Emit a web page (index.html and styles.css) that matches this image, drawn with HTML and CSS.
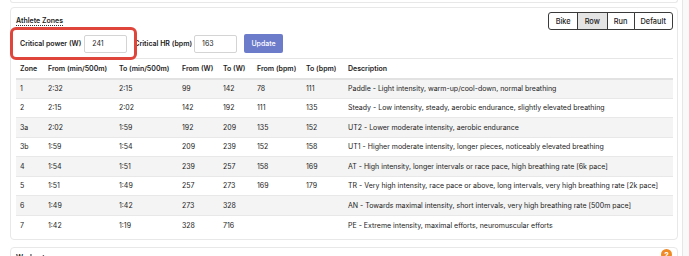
FILE: index.html
```html
<!DOCTYPE html>
<html>
<head>
<meta charset="utf-8">
<link rel="stylesheet" href="styles.css">
</head>
<body>
<div class="page">
  <main class="main">
    <div class="card prev"></div>
    <section class="card zones">
      <div class="highlight"></div>
      <div class="head">
        <h2 class="title">Athlete Zones</h2>
        <div class="btn-group">
          <button class="seg">Bike</button>
          <button class="seg active">Row</button>
          <button class="seg">Run</button>
          <button class="seg">Default</button>
        </div>
      </div>
      <form class="form">
        <label class="lbl">Critical power (W)</label>
        <input class="inp" value="241">
        <label class="lbl lbl2">Critical HR (bpm)</label>
        <input class="inp" value="163">
        <button type="button" class="update">Update</button>
      </form>
      <table class="tbl">
        <colgroup>
          <col class="c1"><col class="c2"><col class="c3"><col class="c4"><col class="c5"><col class="c6"><col class="c7"><col>
        </colgroup>
        <thead>
          <tr><th>Zone</th><th>From (min/500m)</th><th>To (min/500m)</th><th>From (W)</th><th>To (W)</th><th>From (bpm)</th><th>To (bpm)</th><th>Description</th></tr>
        </thead>
        <tbody>
          <tr><td>1</td><td>2:32</td><td>2:15</td><td>99</td><td>142</td><td>78</td><td>111</td><td>Paddle - Light intensity, warm-up/cool-down, normal breathing</td></tr>
          <tr><td>2</td><td>2:15</td><td>2:02</td><td>142</td><td>192</td><td>111</td><td>135</td><td>Steady - Low intensity, steady, aerobic endurance, slightly elevated breathing</td></tr>
          <tr><td>3a</td><td>2:02</td><td>1:59</td><td>192</td><td>209</td><td>135</td><td>152</td><td>UT2 - Lower moderate intensity, aerobic endurance</td></tr>
          <tr><td>3b</td><td>1:59</td><td>1:54</td><td>209</td><td>239</td><td>152</td><td>158</td><td>UT1 - Higher moderate intensity, longer pieces, noticeably elevated breathing</td></tr>
          <tr><td>4</td><td>1:54</td><td>1:51</td><td>239</td><td>257</td><td>158</td><td>169</td><td>AT - High intensity, longer intervals or race pace, high breathing rate [6k pace]</td></tr>
          <tr><td>5</td><td>1:51</td><td>1:49</td><td>257</td><td>273</td><td>169</td><td>179</td><td>TR - Very high intensity, race pace or above, long intervals, very high breathing rate [2k pace]</td></tr>
          <tr><td>6</td><td>1:49</td><td>1:42</td><td>273</td><td>328</td><td></td><td></td><td>AN - Towards maximal intensity, short intervals, very high breathing rate [500m pace]</td></tr>
          <tr><td>7</td><td>1:42</td><td>1:19</td><td>328</td><td>716</td><td></td><td></td><td>PE - Extreme intensity, maximal efforts, neuromuscular efforts</td></tr>
        </tbody>
      </table>
    </section>
    <section class="card next">
      <h2 class="title2">Workouts</h2>
      <span class="help">?</span>
    </section>
  </main>
  <div class="scrollbar"></div>
</div>
</body>
</html>
```
FILE: styles.css
```css
* { box-sizing: border-box; }
html, body { margin: 0; padding: 0; }
body {
  background: #fff;
  font-family: Inter, "Liberation Sans", sans-serif;
  color: #222;
  font-size: 7px;
  overflow: hidden;
  height: 256px;
}
.page { display: flex; height: 256px; }
.main { width: 682px; padding-left: 10px; padding-right: 4px; }
.scrollbar { flex: 1; border-left: 1px solid #e6e6e6; background: #f9f9f9; }
.card {
  background: #fff;
  border: 1px solid #e8e8e8;
  border-radius: 4px;
}
.prev { height: 3px; border-top: none; border-radius: 0 0 4px 4px; }
.zones {
  position: relative;
  margin-top: 4px;
  padding: 4px 4px 4px 5px;
  height: 233px;
}
.highlight {
  position: absolute;
  left: -1px; top: 19px;
  width: 127px; height: 33px;
  border: 3px solid #e0453b;
  border-radius: 6px;
  pointer-events: none;
}
.head { display: flex; justify-content: space-between; align-items: flex-start; height: 18px; }
.title {
  margin: 4px 0 0 0;
  font-size: 7px;
  font-weight: 600;
  line-height: 9px;
  border-bottom: 1px dotted #333;
}
.btn-group { display: flex; }
.seg {
  font-family: inherit;
  font-size: 7.4px;
  font-weight: 500;
  color: #222;
  background: #fff;
  border: 1px solid #3a3a3a;
  height: 18px;
  padding: 0 6px;
  margin-left: -1px;
  border-radius: 0;
}
.seg:first-child { border-radius: 3px 0 0 3px; padding: 0 6px 0 7px; }
.seg:nth-child(2) { padding: 0 7px; }
.seg:last-child { border-radius: 0 3px 3px 0; }
.seg.active { background: #e4e4e4; }
.form { display: flex; align-items: center; height: 19px; margin-top: 4px; margin-left: 4px; }
.lbl { font-weight: 600; font-size: 7px; margin-right: 3px; }
.lbl2 { margin-left: 7px; margin-right: 2px; }
.inp {
  width: 43px; height: 18px;
  border: 1px solid #d4d4d4;
  border-radius: 2px;
  font-family: inherit;
  font-size: 7px;
  padding: 0 7px;
  color: #222;
}
.update {
  margin-left: 7px;
  width: 39px; height: 19px;
  background: #6d7bcb;
  color: #fff;
  border: none;
  border-radius: 2px;
  font-family: inherit;
  font-size: 7px;
  font-weight: 500;
}
.tbl {
  width: 100%;
  margin-top: 5px;
  border-collapse: collapse;
  table-layout: fixed;
}
.c1 { width: 28px; } .c2 { width: 71px; } .c3 { width: 63px; } .c4 { width: 41px; }
.c5 { width: 34px; } .c6 { width: 49px; } .c7 { width: 42px; }
.tbl th, .tbl td {
  text-align: left;
  padding: 0 4px;
  white-space: nowrap;
  overflow: hidden;
}
.tbl th {
  font-weight: 600;
  height: 20px;
  border-top: 1px solid #e6e6e6;
  border-bottom: 2px solid #e2e2e2;
}
.tbl td {
  height: 19.5px;
  font-weight: 400;
  border-bottom: 1px solid #e8e8e8;
}
.tbl tbody tr:nth-child(odd) td { background: #f4f4f4; }
.tbl tbody tr:last-child td { border-bottom: none; }
.next {
  position: relative;
  margin-top: 7px;
  height: 30px;
  padding: 5px 5px;
}
.title2 { margin: 0; font-size: 7px; font-weight: 600; }
.help {
  position: absolute;
  right: 5px; top: 1px;
  width: 11px; height: 11px;
  border-radius: 50%;
  background: #f08a24;
  color: #fff;
  font-size: 8px;
  font-weight: 700;
  display: flex; align-items: center; justify-content: center;
}
```
